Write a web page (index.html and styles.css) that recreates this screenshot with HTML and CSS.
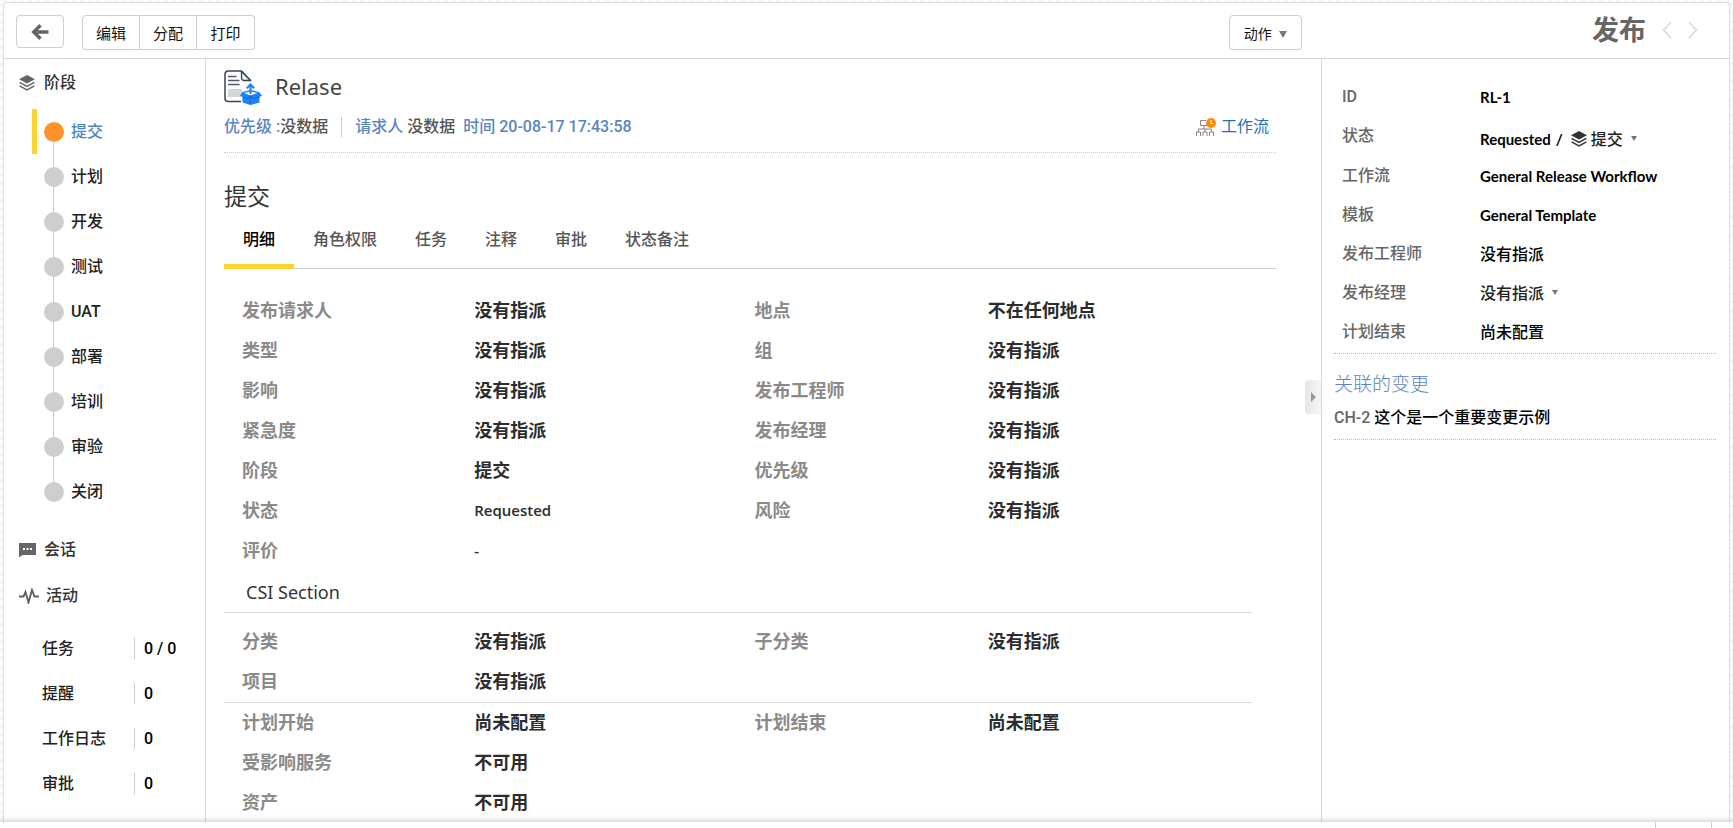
FILE: index.html
```html
<!DOCTYPE html>
<html lang="zh-CN">
<head>
<meta charset="utf-8">
<title>发布 RL-1</title>
<link rel="stylesheet" href="styles.css">
</head>
<body>
<svg class="defs" aria-hidden="true">
  <symbol id="layers" viewBox="0 0 16 16">
    <path d="M8 0 16 4.2 8 8.4 0 4.2z" fill="currentColor"/>
    <path d="M.6 7.4 8 11.3l7.4-3.9M.6 10.9 8 14.8l7.4-3.9" fill="none" stroke="currentColor" stroke-width="1.5"/>
  </symbol>
</svg>
<div class="panel">
  <header class="toolbar">
    <button class="btn btn-back" aria-label="返回">
      <svg width="18" height="16" viewBox="0 0 18 16"><path d="M9.500 1.200 2.700 8l6.800 6.800M3 8h14.500" fill="none" stroke="#666" stroke-width="3.400"/></svg>
    </button>
    <div class="btn-group">
      <button class="btn">编辑</button>
      <button class="btn">分配</button>
      <button class="btn">打印</button>
    </div>
    <button class="btn btn-action">动作 <span class="caret caret-lg"></span></button>
    <div class="module">
      <h1>发布</h1>
      <button class="nav-arrow" aria-label="上一条"><svg width="10" height="18" viewBox="0 0 10 18"><path d="M9 1 1.500 9 9 17" fill="none" stroke="#d6d6d6" stroke-width="1.500"/></svg></button>
      <button class="nav-arrow" aria-label="下一条"><svg width="10" height="18" viewBox="0 0 10 18"><path d="M1 1 8.500 9 1 17" fill="none" stroke="#d6d6d6" stroke-width="1.500"/></svg></button>
    </div>
  </header>

  <div class="columns">
    <nav class="sidebar">
      <h2 class="side-title"><svg width="16" height="16"><use href="#layers"/></svg>阶段</h2>
      <ol class="stages">
        <li class="stage current"><span class="dot"></span>提交</li>
        <li class="stage"><span class="dot"></span>计划</li>
        <li class="stage"><span class="dot"></span>开发</li>
        <li class="stage"><span class="dot"></span>测试</li>
        <li class="stage"><span class="dot"></span>UAT</li>
        <li class="stage"><span class="dot"></span>部署</li>
        <li class="stage"><span class="dot"></span>培训</li>
        <li class="stage"><span class="dot"></span>审验</li>
        <li class="stage"><span class="dot"></span>关闭</li>
      </ol>
      <h2 class="side-title side-chat"><svg width="17" height="16" viewBox="0 0 17 16"><path d="M0 1h17v12H3.500L0 15.500z" fill="#666"/><path d="M4 6h2v2H4zm3.500 0h2v2h-2zM11 6h2v2h-2z" fill="#fff"/></svg>会话</h2>
      <h2 class="side-title side-activity"><svg width="20" height="16" viewBox="0 0 20 16"><path d="M0 8.500h4.500L6.500 4l3 10.500L13 2l2.500 6.500H20" fill="none" stroke="#606060" stroke-width="1.900"/></svg>活动</h2>
      <dl class="counts">
        <div><dt>任务</dt><dd>0 / 0</dd></div>
        <div><dt>提醒</dt><dd>0</dd></div>
        <div><dt>工作日志</dt><dd>0</dd></div>
        <div><dt>审批</dt><dd>0</dd></div>
      </dl>
    </nav>

    <main class="content">
      <div class="title-row">
        <svg width="38" height="36" viewBox="0 0 38 36">
          <path d="M17.500 1H4a3 3 0 0 0-3 3v24.500a3 3 0 0 0 3 3h13M17.500 1 26.500 10.500" fill="none" stroke="#3b4250" stroke-width="1.500"/>
          <path d="M17.500 1.500V8a2.500 2.500 0 0 0 2.500 2.500h6.500z" fill="#dff0fb" stroke="#3b4250" stroke-width="1.300"/>
          <path d="M4 6.500h8.500M4 10.500h11.500M4 14.500h11.500" stroke="#50586a" stroke-width="1.400"/>
          <path d="M4 19h14v8H4z" fill="#d3d6db"/>
          <path d="M18.500 22 26.500 20l8.500 2 3 3.500-2.500 1.500v5.500l-9 2.500-8-2.500V27l-2.500-1.500z" fill="#1a82fb"/>
          <path d="M20 23 26.500 21.500 33.500 23l-7 2.500z" fill="#fff"/>
          <path d="M26.500 25.500v9M18.500 27l6 1.500 2-3 2 3 7-1.500" fill="none" stroke="#0d68d8" stroke-width="1"/>
          <path d="M26.500 24v-9.500M22.800 18.300l3.700-3.800 3.700 3.800" fill="none" stroke="#1a82fb" stroke-width="2"/>
        </svg>
        <h2 class="title">Relase</h2>
      </div>
      <div class="meta">
        <span><b>优先级 :</b>没数据</span>
        <span class="meta-who"><b>请求人</b> 没数据</span>
        <b class="meta-time">时间 20-08-17 17:43:58</b>
        <a class="workflow" href="#workflow">
          <svg width="20" height="19" viewBox="0 0 20 19">
            <path d="M10 2.500H4.500v5h7V6M8 7.500V11M.5 18v-4h4v4M7 18v-4h4v4M13.500 18v-4h4v4M2.500 14v-3h13v3M9 11v3" fill="none" stroke="#858585"/>
            <circle cx="15" cy="5" r="5" fill="#ff8a00"/><path d="M15 2v3.500h2.500" fill="none" stroke="#fff" stroke-width="1.200"/>
          </svg>工作流</a>
      </div>
      <h3 class="stage-name">提交</h3>
      <div class="tabs" role="tablist">
        <button class="tab active" role="tab" aria-selected="true">明细</button>
        <button class="tab" role="tab">角色权限</button>
        <button class="tab" role="tab">任务</button>
        <button class="tab" role="tab">注释</button>
        <button class="tab" role="tab">审批</button>
        <button class="tab" role="tab">状态备注</button>
      </div>
      <dl class="fields fields-main">
        <dt>发布请求人</dt><dd>没有指派</dd><dt>地点</dt><dd>不在任何地点</dd>
        <dt>类型</dt><dd>没有指派</dd><dt>组</dt><dd>没有指派</dd>
        <dt>影响</dt><dd>没有指派</dd><dt>发布工程师</dt><dd>没有指派</dd>
        <dt>紧急度</dt><dd>没有指派</dd><dt>发布经理</dt><dd>没有指派</dd>
        <dt>阶段</dt><dd>提交</dd><dt>优先级</dt><dd>没有指派</dd>
        <dt>状态</dt><dd class="latin">Requested</dd><dt>风险</dt><dd>没有指派</dd>
        <dt>评价</dt><dd class="latin wide">-</dd>
      </dl>
      <h4 class="section-title">CSI Section</h4>
      <dl class="fields fields-csi">
        <dt>分类</dt><dd>没有指派</dd><dt>子分类</dt><dd>没有指派</dd>
        <dt>项目</dt><dd class="wide">没有指派</dd>
      </dl>
      <dl class="fields fields-plan">
        <dt>计划开始</dt><dd>尚未配置</dd><dt>计划结束</dt><dd>尚未配置</dd>
        <dt>受影响服务</dt><dd class="wide">不可用</dd>
        <dt>资产</dt><dd class="wide">不可用</dd>
      </dl>
    </main>

    <aside class="summary">
      <button class="handle" aria-label="收起"><span class="handle-arrow"></span></button>
      <dl class="facts">
        <dt>ID</dt><dd>RL-1</dd>
        <dt>状态</dt><dd class="status">Requested <span>/</span> <button class="pick"><svg width="16" height="16"><use href="#layers"/></svg>提交<span class="caret"></span></button></dd>
        <dt>工作流</dt><dd>General Release Workflow</dd>
        <dt>模板</dt><dd>General Template</dd>
        <dt>发布工程师</dt><dd class="cjk">没有指派</dd>
        <dt>发布经理</dt><dd class="cjk"><button class="pick">没有指派<span class="caret"></span></button></dd>
        <dt>计划结束</dt><dd class="cjk">尚未配置</dd>
      </dl>
      <section class="related">
        <h3>关联的变更</h3>
        <p><span>CH-2</span> 这个是一个重要变更示例</p>
      </section>
    </aside>
  </div>
</div>
<footer class="dock"><div class="dock-slot"></div></footer>
</body>
</html>
```
FILE: styles.css
```css
* { box-sizing: border-box; }
body {
  margin: 0;
  height: 100vh;
  display: flex;
  flex-direction: column;
  overflow: hidden;
  color: #222;
  font: 500 16px/24px Roboto, "Noto Sans CJK SC", sans-serif;
  background: repeating-linear-gradient(45deg, #f3f3f3 0 1px, transparent 1px 6px),
    repeating-linear-gradient(-45deg, #f3f3f3 0 1px, transparent 1px 6px), #fcfcfc;
}
h1, h2, h3, h4, p, dl, dd, ol { margin: 0; padding: 0; font-weight: 500; }
ol { list-style: none; }
button { font: inherit; color: inherit; background: none; border: 0; padding: 0; cursor: pointer; }
.defs { position: absolute; width: 0; height: 0; }

/* Frame and toolbar */
.panel {
  flex: 1;
  min-height: 0;
  margin: 2px 3px 0;
  display: flex;
  flex-direction: column;
  background: #fff;
  border: 1px solid #dcdcdc;
  border-bottom: 0;
  border-radius: 4px 4px 0 0;
}
.toolbar {
  display: flex;
  align-items: flex-start;
  height: 56px;
  padding: 12px 31px 0 12px;
  border-bottom: 1px solid #d5d5d5;
}
.btn {
  height: 35px;
  border: 1px solid #ccc;
  border-radius: 4px;
  background: #fff;
  color: #111;
  font-size: 15px;
  font-weight: 400;
}
.btn-back { width: 48px; height: 33px; display: flex; align-items: center; justify-content: center; }
.btn-group { display: flex; margin-left: 18px; }
.btn-group .btn { width: 57px; padding-top: 2px; }
.btn-group .btn + .btn { border-left-width: 0; border-radius: 0; }
.btn-group .btn:first-child { width: 58px; border-radius: 4px 0 0 4px; }
.btn-group .btn:last-child { width: 58px; border-radius: 0 4px 4px 0; }
.btn-action { width: 73px; padding-top: 2px; font-size: 14px; margin-left: auto; }
.caret {
  display: inline-block;
  border: 3px solid transparent;
  border-top: 5px solid #777;
  border-bottom: 0;
  margin-left: 8px;
}
.caret-lg { border-width: 7px 4px 0; margin-left: 4px; vertical-align: 1px; }
.module {
  width: 396px;
  display: flex;
  align-items: center;
  justify-content: flex-end;
  gap: 16px;
  height: 29px;
}
.module h1 { padding-top: 3px; color: #666; font-size: 27px; font-weight: 700; }
.nav-arrow { display: flex; }

/* Stage navigation */
.columns { flex: 1; min-height: 0; display: flex; overflow: hidden; }
.sidebar { width: 202px; flex: none; padding-top: 12px; border-right: 1px solid #d8d8d8; }
.side-title { display: flex; align-items: center; gap: 9px; height: 24px; padding-left: 15px; font-size: 16px; color: #333; }
.side-title svg { color: #666; }
.stages { margin-top: 14px; }
.stage { position: relative; display: flex; align-items: center; gap: 7px; height: 45px; margin-left: 28px; padding-left: 12px; }
.stage.current { padding-left: 7px; border-left: 5px solid #fdd42f; color: #4d86bd; }
.dot { width: 20px; height: 20px; border-radius: 50%; background: #cecece; }
.current .dot { background: #ff922b; }
.stage:not(:last-child)::after { content: ""; position: absolute; left: 21px; top: 32px; width: 1px; height: 26px; background: #ccc; }
.stage.current::after { left: 16px; }
.side-chat { margin-top: 24px; gap: 8px; }
.side-activity { margin-top: 22px; gap: 7px; }
.counts { margin-top: 18px; }
.counts div { display: flex; align-items: center; height: 45px; padding-left: 38px; }
.counts dt { width: 92px; }
.counts dd { border-left: 1px solid #ccc; padding-left: 9px; line-height: 21px; color: #000; }

/* Record details */
.content { flex: 1; min-width: 0; padding: 11px 45px 0 18px; overflow: hidden; }
.title-row { display: flex; align-items: center; gap: 13px; height: 36px; }
.title { color: #444; font: 400 22px/32px "Noto Sans", sans-serif; height: 36px; }
.meta { display: flex; align-items: center; height: 47px; padding-bottom: 4px; color: #555; border-bottom: 1px dotted #ccc; }
.meta b { color: #5b85bd; font-weight: 500; }
.meta-who { margin-left: 13px; padding-left: 13px; border-left: 1px solid #ccc; line-height: 20px; }
.meta-time { margin-left: 8px; }
.workflow { display: flex; align-items: center; gap: 5px; margin-left: auto; padding-right: 7px; color: #2172b8; text-decoration: none; font-weight: 400; }
.stage-name { margin-top: 29px; color: #333; font-size: 23px; font-weight: 400; line-height: 31px; }
.tabs { display: flex; height: 56px; border-bottom: 1px solid #ccc; }
.tab { height: 56px; padding: 2px 19px 0; border-bottom: 5px solid transparent; color: #555; }
.tab.active { color: #000; border-bottom-color: #fdd42f; }
.fields {
  display: grid;
  grid-template-columns: 232fr 280fr 233fr 264fr;
  grid-auto-rows: 40px;
  align-items: center;
  margin-right: 24px;
  padding-left: 18px;
  font-size: 18px;
  font-weight: 700;
}
.fields dt { color: #8a8a8a; }
.fields dd { color: #2c2c2c; font-weight: 700; }
.fields .latin { padding-bottom: 3px; font-family: "Open Sans", sans-serif; font-size: 15px; font-weight: 600; }
.wide { grid-column: 2 / -1; }
.fields-main { padding-top: 22px; }
.section-title {
  height: 42px;
  margin-right: 24px;
  padding-left: 22px;
  border-bottom: 1px solid #d8d8d8;
  color: #333;
  font: 400 18px/42px "Noto Sans", sans-serif;
}
.fields-csi { padding-top: 9px; border-bottom: 1px solid #d8d8d8; }

/* Summary column */
.summary { position: relative; width: 408px; flex: none; padding: 18px 13px 0 12px; border-left: 1px solid #d8d8d8; }
.handle {
  position: absolute;
  left: -17px;
  top: 321px;
  width: 16px;
  height: 34px;
  display: flex;
  align-items: center;
  justify-content: center;
  border-radius: 4px 0 0 4px;
  background: linear-gradient(90deg, #e6e6e6, #f6f6f6);
}
.handle-arrow { border: 5px solid transparent; border-left-color: #999; border-right: 0; }
.facts {
  display: grid;
  grid-template-columns: 138px 1fr;
  grid-template-rows: 39px 40px;
  grid-auto-rows: 39px;
  align-items: center;
  padding: 0 0 2px 8px;
  border-bottom: 1px dotted #bbb;
}
.facts dt { color: #666; }
.facts dd { color: #000; font-family: Lato, "Noto Sans CJK SC", sans-serif; font-size: 15px; font-weight: 700; }
.facts .cjk, .facts .pick { font-size: 16px; font-weight: 500; }
.facts .status { display: flex; align-items: center; gap: 5px; padding-top: 5px; }
.pick { display: inline-flex; align-items: center; color: #222; }
.pick svg { margin: 0 4px 0 3px; color: #333; }
.related { border-bottom: 1px dotted #bbb; padding: 17px 0 9px; }
.related h3 { color: #5b85bd; font-size: 19px; font-weight: 300; line-height: 28px; }
.related p { margin-top: 7px; color: #000; }
.related p span { color: #666; }

.dock { position: relative; display: flex; justify-content: flex-end; height: 6px; padding-right: 21px; background: #fff; box-shadow: 0 0 7px rgba(0, 0, 0, .3); }
.dock-slot { width: 57px; border: solid #ccc; border-width: 0 1px; }
```
